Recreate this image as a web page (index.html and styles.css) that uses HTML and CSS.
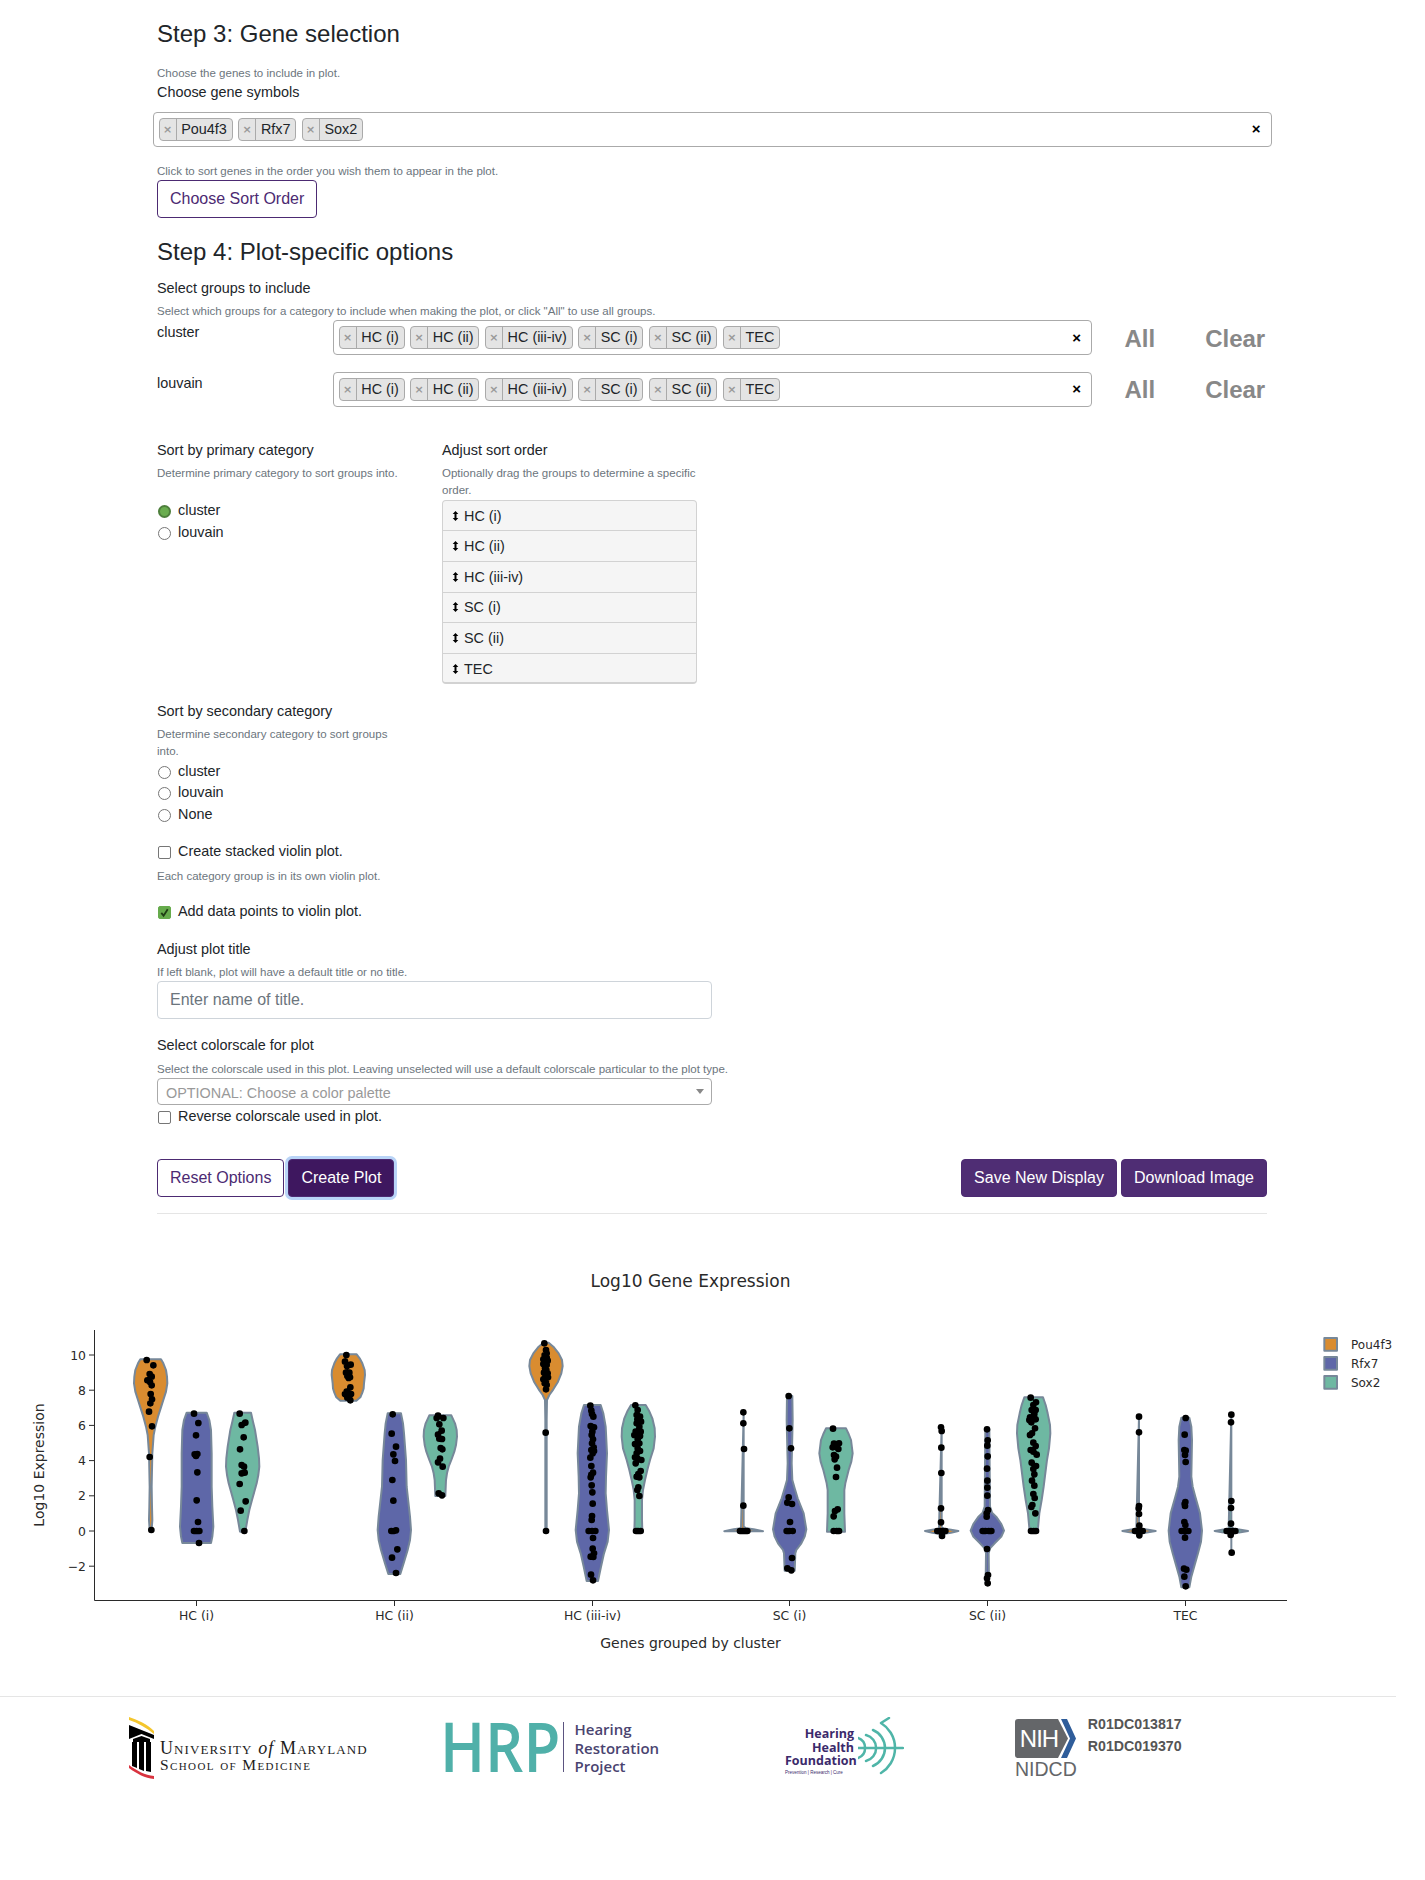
FILE: index.html
```html
<!DOCTYPE html>
<html>
  <head>
    <meta charset="utf-8">
    <title>Plot options</title>
    <link rel="stylesheet" href="styles.css">
  </head>
  <body>
    <svg class="defs" width="0" height="0">
      <symbol id="updown" viewBox="0 0 8 12">
        <path d="M4 0 7.4 3.6H5.2V8.4H7.4L4 12 .6 8.4H2.8V3.6H.6Z"/>
      </symbol>
    </svg>

    <div class="main">
      <h4 class="step">Step 3: Gene selection</h4>
      <div class="hint hint-first">Choose the genes to include in plot.</div>
      <div class="lbl">Choose gene symbols</div>
      <div class="tagbox tagbox-wide">
        <span class="chip"><i>×</i><b>Pou4f3</b></span>
        <span class="chip"><i>×</i><b>Rfx7</b></span>
        <span class="chip"><i>×</i><b>Sox2</b></span>
        <span class="clear-x">×</span>
      </div>
      <div class="hint hint-sort">Click to sort genes in the order you wish them to appear in the plot.</div>
      <button class="btn btn-line">Choose Sort Order</button>

      <h4 class="step step-four">Step 4: Plot-specific options</h4>
      <div class="lbl lbl-groups">Select groups to include</div>
      <div class="hint">Select which groups for a category to include when making the plot, or click "All" to use all groups.</div>

      <div class="group-row">
        <div class="lbl">cluster</div>
        <div class="tagbox">
          <span class="chip"><i>×</i><b>HC (i)</b></span>
          <span class="chip"><i>×</i><b>HC (ii)</b></span>
          <span class="chip"><i>×</i><b>HC (iii-iv)</b></span>
          <span class="chip"><i>×</i><b>SC (i)</b></span>
          <span class="chip"><i>×</i><b>SC (ii)</b></span>
          <span class="chip"><i>×</i><b>TEC</b></span>
          <span class="clear-x">×</span>
        </div>
        <div class="all-clear"><span>All</span><span>Clear</span></div>
      </div>
      <div class="group-row group-row-two">
        <div class="lbl">louvain</div>
        <div class="tagbox">
          <span class="chip"><i>×</i><b>HC (i)</b></span>
          <span class="chip"><i>×</i><b>HC (ii)</b></span>
          <span class="chip"><i>×</i><b>HC (iii-iv)</b></span>
          <span class="chip"><i>×</i><b>SC (i)</b></span>
          <span class="chip"><i>×</i><b>SC (ii)</b></span>
          <span class="chip"><i>×</i><b>TEC</b></span>
          <span class="clear-x">×</span>
        </div>
        <div class="all-clear"><span>All</span><span>Clear</span></div>
      </div>

      <div class="sort-cols">
        <div>
          <div class="lbl">Sort by primary category</div>
          <div class="hint">Determine primary category to sort groups into.</div>
          <div class="choices choices-primary">
            <div class="choice"><span class="radio on"></span>cluster</div>
            <div class="choice"><span class="radio"></span>louvain</div>
          </div>
        </div>
        <div>
          <div class="lbl">Adjust sort order</div>
          <div class="hint">Optionally drag the groups to determine a specific order.</div>
          <ul class="sortlist">
            <li><svg><use href="#updown"/></svg>HC (i)</li>
            <li><svg><use href="#updown"/></svg>HC (ii)</li>
            <li><svg><use href="#updown"/></svg>HC (iii-iv)</li>
            <li><svg><use href="#updown"/></svg>SC (i)</li>
            <li><svg><use href="#updown"/></svg>SC (ii)</li>
            <li><svg><use href="#updown"/></svg>TEC</li>
          </ul>
        </div>
      </div>

      <div class="narrow">
        <div class="lbl lbl-secondary">Sort by secondary category</div>
        <div class="hint">Determine secondary category to sort groups into.</div>
        <div class="choices">
          <div class="choice"><span class="radio"></span>cluster</div>
          <div class="choice"><span class="radio"></span>louvain</div>
          <div class="choice"><span class="radio"></span>None</div>
        </div>
      </div>

      <div class="choice choice-stacked"><span class="box"></span>Create stacked violin plot.</div>
      <div class="hint hint-stacked">Each category group is in its own violin plot.</div>
      <div class="choice choice-points">
        <span class="box on"><svg viewBox="0 0 12 12"><path d="M2.5 6.500 5 9.500 9.500 2.500"/></svg></span>Add data points to violin plot.
      </div>

      <div class="lbl lbl-title">Adjust plot title</div>
      <div class="hint hint-title">If left blank, plot will have a default title or no title.</div>
      <div class="text-input">Enter name of title.</div>

      <div class="lbl lbl-scale">Select colorscale for plot</div>
      <div class="hint">Select the colorscale used in this plot. Leaving unselected will use a default colorscale particular to the plot type.</div>
      <div class="select-box"><span class="select-text">OPTIONAL: Choose a color palette</span><span class="caret"></span></div>
      <div class="choice choice-reverse"><span class="box"></span>Reverse colorscale used in plot.</div>

      <div class="btn-row">
        <div class="btn-group">
          <button class="btn btn-line">Reset Options</button>
          <button class="btn btn-focus">Create Plot</button>
        </div>
        <div class="btn-group">
          <button class="btn btn-fill">Save New Display</button>
          <button class="btn btn-fill">Download Image</button>
        </div>
      </div>
      <div class="rule"></div>
    </div>

    <svg class="plot" viewBox="0 1214 1425 482" width="1425" height="482">
      <text class="plot-title" x="690.5" y="1287">Log10 Gene Expression</text>
      <text class="axis-title" x="690.5" y="1648">Genes grouped by cluster</text>
      <text class="axis-title" transform="translate(44 1465) rotate(-90)">Log10 Expression</text>

      <path class="axis" d="M94.5 1330V1600.5H1287M89 1355H94M89 1390.2H94M89 1425.4H94M89 1460.6H94M89 1495.8H94M89 1531H94M89 1566.2H94M196.5 1600V1606M394.5 1600V1606M592.5 1600V1606M789.5 1600V1606M987.5 1600V1606M1185.5 1600V1606"/>
      <text class="tick tick-y" x="86" y="1359.5">10</text>
      <text class="tick tick-y" x="86" y="1394.5">8</text>
      <text class="tick tick-y" x="86" y="1430">6</text>
      <text class="tick tick-y" x="86" y="1465">4</text>
      <text class="tick tick-y" x="86" y="1500">2</text>
      <text class="tick tick-y" x="86" y="1535.5">0</text>
      <text class="tick tick-y" x="86" y="1570.5">−2</text>
      <text class="tick" x="196.5" y="1620">HC (i)</text>
      <text class="tick" x="394.5" y="1620">HC (ii)</text>
      <text class="tick" x="592.5" y="1620">HC (iii-iv)</text>
      <text class="tick" x="789.5" y="1620">SC (i)</text>
      <text class="tick" x="987.5" y="1620">SC (ii)</text>
      <text class="tick" x="1185.5" y="1620">TEC</text>

      <g transform="translate(20 1320) scale(.33333)">
        <polygon class="orange" transform="translate(392 0)" points="-31,118 31,118 38,130 46,150 49,170 50,190 46,215 38,240 30,265 22,290 14,320 9,345 5,400 3,500 4,560 5,600 3,630 -3,630 -5,600 -4,560 -3,500 -5,400 -9,345 -14,320 -22,290 -30,265 -38,240 -46,215 -50,190 -49,170 -46,150 -38,130"/>
        <polygon class="blue" transform="translate(530 0)" points="-30,278 30,278 38,300 43,330 45,400 45,500 47,560 50,620 47,650 43,669 -43,669 -47,650 -50,620 -47,560 -45,500 -45,400 -43,330 -38,300"/>
        <polygon class="green" transform="translate(668 0)" points="-25,278 25,278 31,305 37,330 45,380 49,415 50,440 47,465 42,490 28,540 20,570 14,600 8,635 -8,635 -14,600 -20,570 -28,540 -42,490 -47,465 -50,440 -49,415 -45,380 -37,330 -31,305"/>
        <polygon class="orange" transform="translate(985 0)" points="-25,103 25,103 34,115 42,130 49,150 50,165 47,190 46,205 42,218 36,232 24,242 -24,242 -36,232 -42,218 -46,205 -47,190 -50,165 -49,150 -42,130 -34,115"/>
        <polygon class="blue" transform="translate(1123 0)" points="-20,280 20,280 26,310 29,340 35,420 37,500 42,545 47,590 50,630 47,660 40,690 28,730 18,762 -18,762 -28,730 -40,690 -47,660 -50,630 -47,590 -42,545 -37,500 -35,420 -29,340 -26,310"/>
        <polygon class="green" transform="translate(1261 0)" points="-33,286 33,286 44,310 49,330 50,350 47,375 42,395 33,420 25,440 20,460 17,480 15,528 -15,528 -17,480 -20,460 -25,440 -33,420 -42,395 -47,375 -50,350 -49,330 -44,310"/>
        <path class="dots" d="M380 120h.1M400 136h.1M389 162h.1M395 170h.1M382 181h.1M390 186h.1M395 196h.1M392 222h.1M396 238h.1M391 250h.1M387 275h.1M396 319h.1M389 411h.1M394 630h.1
          M522 281h.1M535 309h.1M528 346h.1M524 403h.1M532 402h.1M528 408h.1M532 457h.1M530 541h.1M534 606h.1M522 633h.1M530 633h.1M538 633h.1M537 669h.1
          M659 281h.1M676 308h.1M665 315h.1M671 352h.1M660 388h.1M665 435h.1M672 440h.1M665 460h.1M674 458h.1M659 492h.1M677 544h.1M662 572h.1M673 633h.1
          M979 105h.1M975 125h.1M992 134h.1M981 138h.1M978 158h.1M988 158h.1M982 168h.1M990 172h.1M986 174h.1M991 202h.1M980 215h.1M993 222h.1M975 222h.1M982 233h.1M991 241h.1
          M1118 283h.1M1115 341h.1M1128 380h.1M1120 403h.1M1125 423h.1M1117 480h.1M1120 542h.1M1114 633h.1M1122 633h.1M1128 631h.1M1132 688h.1M1116 713h.1M1128 759h.1
          M1254 287h.1M1250 294h.1M1270 294h.1M1258 313h.1M1265 332h.1M1254 344h.1M1258 356h.1M1266 357h.1M1262 384h.1M1267 388h.1M1260 416h.1M1254 427h.1M1268 440h.1M1256 520h.1M1266 526h.1"/>
      </g>

      <g transform="translate(480 1320) scale(.33333)">
        <polygon class="orange" transform="translate(198 0)" points="-8,68 8,68 22,80 38,100 48,120 50,138 46,160 36,185 22,208 10,225 3,240 2,300 2,630 -2,630 -2,300 -3,240 -10,225 -22,208 -36,185 -46,160 -50,138 -48,120 -38,100 -22,80"/>
        <polygon class="blue" transform="translate(337 0)" points="-25,255 25,255 33,280 40,320 44,400 41,470 40,520 44,570 50,630 46,665 35,700 26,740 17,783 -17,783 -26,740 -35,700 -46,665 -50,630 -44,570 -40,520 -41,470 -44,400 -40,320 -33,280"/>
        <polygon class="green" transform="translate(475 0)" points="-22,255 22,255 32,272 42,295 49,325 50,350 46,385 35,420 27,450 20,480 14,510 11,540 11,600 12,635 -12,635 -11,600 -11,540 -14,510 -20,480 -27,450 -35,420 -46,385 -50,350 -49,325 -42,295 -32,272"/>
        <polygon class="orange" transform="translate(791 0)" points="0,277 0,620 8,625 30,628 58,634 -58,634 -30,628 -8,625"/>
        <polygon class="blue" transform="translate(929 0)" points="-8,228 8,228 9,300 6,430 8,480 15,505 24,535 42,580 50,628 45,650 35,670 20,690 17,700 15,752 -15,752 -17,700 -20,690 -35,670 -45,650 -50,628 -42,580 -24,535 -15,505 -8,480 -6,430 -9,300"/>
        <polygon class="green" transform="translate(1068 0)" points="-30,325 30,325 38,342 45,360 50,400 46,425 38,450 28,490 25,510 25,580 27,635 -27,635 -25,580 -25,510 -28,490 -38,450 -46,425 -50,400 -45,360 -38,342"/>
        <polygon class="orange" transform="translate(1385 0)" points="0,318 0,622 8,626 28,629 50,633 28,638 8,641 -8,641 -28,638 -50,633 -28,629 -8,626"/>
        <path class="dots" d="M193 70h.1M198 90h.1M200 100h.1M194 105h.1M200 112h.1M190 118h.1M203 122h.1M195 125h.1M190 132h.1M200 135h.1M195 145h.1M199 150h.1M192 158h.1M203 160h.1M196 170h.1M190 178h.1M204 172h.1M198 182h.1M194 190h.1M200 195h.1M198 208h.1M197 338h.1M198 633h.1
          M331 257h.1M334 272h.1M336 282h.1M340 290h.1M332 318h.1M342 322h.1M337 335h.1M335 345h.1M339 358h.1M336 370h.1M341 382h.1M334 390h.1M342 393h.1M338 400h.1M331 413h.1M334 438h.1M339 458h.1M334 464h.1M332 472h.1M335 496h.1M337 517h.1M338 551h.1M336 588h.1M335 600h.1M326 633h.1M336 633h.1M346 633h.1M339 654h.1M338 686h.1M342 700h.1M332 710h.1M340 711h.1M333 764h.1M339 781h.1
          M466 256h.1M473 270h.1M470 285h.1M480 290h.1M472 298h.1M483 305h.1M470 310h.1M478 320h.1M467 335h.1M482 335h.1M472 342h.1M463 345h.1M480 348h.1M473 358h.1M478 370h.1M465 372h.1M473 385h.1M480 393h.1M470 400h.1M465 412h.1M484 420h.1M472 415h.1M467 430h.1M482 453h.1M475 462h.1M470 470h.1M478 472h.1M475 502h.1M472 510h.1M478 528h.1M468 633h.1M474 633h.1M482 633h.1
          M790 277h.1M790 310h.1M792 387h.1M790 557h.1M780 633h.1M788 633h.1M796 633h.1M802 633h.1
          M926 228h.1M928 325h.1M933 385h.1M926 532h.1M922 548h.1M936 552h.1M930 606h.1M920 633h.1M928 633h.1M938 633h.1M936 714h.1M922 745h.1M934 751h.1
          M1059 326h.1M1062 371h.1M1077 370h.1M1058 382h.1M1075 387h.1M1062 405h.1M1068 410h.1M1064 418h.1M1071 443h.1M1068 471h.1M1073 568h.1M1065 573h.1M1061 589h.1M1061 633h.1M1070 633h.1M1077 633h.1
          M1383 322h.1M1385 333h.1M1384 383h.1M1384 459h.1M1383 565h.1M1383 607h.1M1372 633h.1M1380 633h.1M1388 633h.1M1396 633h.1M1386 648h.1"/>
      </g>

      <g transform="translate(940 1320) scale(.33333)">
        <polygon class="blue" transform="translate(142 0)" points="-6,328 6,328 8,560 14,578 28,592 42,612 50,632 42,650 22,670 8,685 4,700 5,790 -5,790 -4,700 -8,685 -22,670 -42,650 -50,632 -42,612 -28,592 -14,578 -8,560"/>
        <polygon class="green" transform="translate(281 0)" points="-28,232 28,232 36,255 42,280 49,315 50,340 46,385 40,420 30,500 24,540 17,580 12,635 -12,635 -17,580 -24,540 -30,500 -40,420 -46,385 -50,340 -49,315 -42,280 -36,255"/>
        <polygon class="orange" transform="translate(597 0)" points="0,290 0,622 8,626 28,629 50,633 28,637 8,640 -8,640 -28,637 -50,633 -28,629 -8,626"/>
        <polygon class="blue" transform="translate(736 0)" points="-12,293 12,293 18,320 20,360 18,470 22,500 30,530 44,580 50,632 47,665 38,700 28,735 18,770 12,802 -12,802 -18,770 -28,735 -38,700 -47,665 -50,632 -44,580 -30,530 -22,500 -18,470 -20,360 -18,320"/>
        <polygon class="green" transform="translate(874 0)" points="0,283 0,622 8,626 28,629 50,633 28,637 8,640 0,645 0,698 0,645 -8,640 -28,637 -50,633 -28,629 -8,626"/>
        <path class="dots" d="M141 328h.1M143 361h.1M142 377h.1M143 409h.1M141 446h.1M142 482h.1M142 503h.1M142 527h.1M144 570h.1M140 580h.1M140 590h.1M128 633h.1M136 633h.1M146 633h.1M154 633h.1M141 687h.1M144 765h.1M141 775h.1M143 790h.1
          M272 233h.1M288 247h.1M280 255h.1M275 270h.1M287 270h.1M283 282h.1M270 292h.1M287 298h.1M268 300h.1M274 307h.1M285 325h.1M276 340h.1M270 345h.1M280 368h.1M287 378h.1M272 390h.1M280 395h.1M290 404h.1M275 428h.1M288 438h.1M280 447h.1M283 463h.1M276 482h.1M283 497h.1M280 522h.1M284 534h.1M277 555h.1M274 561h.1M286 580h.1M273 633h.1M281 633h.1M288 633h.1
          M597 290h.1M597 337h.1M597 558h.1M596 565h.1M597 582h.1M598 617h.1M585 633h.1M592 633h.1M600 633h.1M608 633h.1M598 646h.1
          M737 294h.1M734 344h.1M733 390h.1M737 392h.1M735 405h.1M737 426h.1M736 546h.1M734 552h.1M735 558h.1M733 606h.1M736 615h.1M725 633h.1M735 633h.1M745 633h.1M735 653h.1M732 746h.1M739 749h.1M733 770h.1M737 799h.1
          M874 284h.1M873 307h.1M874 543h.1M873 564h.1M873 611h.1M860 633h.1M870 633h.1M878 633h.1M886 633h.1M872 645h.1M875 698h.1"/>
        <rect class="orange" x="1153" y="54" width="38" height="38"/>
        <rect class="blue" x="1153" y="111" width="38" height="38"/>
        <rect class="green" x="1153" y="168" width="38" height="38"/>
      </g>
      <text class="legend" x="1351" y="1349">Pou4f3</text>
      <text class="legend" x="1351" y="1368">Rfx7</text>
      <text class="legend" x="1351" y="1387">Sox2</text>
    </svg>

    <div class="footer">
      <div class="logo logo-umd">
        <svg class="umd-mark" viewBox="0 0 25 62" width="25" height="62">
          <path fill="#f4c62d" d="M0 0C9 3 18 7 25 14V17C18 11 9 6 0 3Z"/>
          <path d="M0 8 25 18V22L12.500 17 0 22Z"/>
          <path d="M4 22 12.500 19 21 22V25H4Z"/>
          <path d="M3 25H8V51L3 49ZM10 25H15V54L10 52ZM17 25H22V55L17 54Z"/>
          <path fill="#d9333f" d="M0 48C8 54 16 58 25 59V62C16 61 8 57 0 51Z"/>
        </svg>
        <div class="umd-text">
          <div class="umd-top">University <em>of</em> Maryland</div>
          <div class="umd-bottom">School of Medicine</div>
        </div>
      </div>

      <div class="logo logo-hrp">
        <span class="hrp-big">HRP</span>
        <span class="hrp-bar"></span>
        <span class="hrp-small">Hearing<br>Restoration<br>Project</span>
      </div>

      <div class="logo logo-hhf">
        <div class="hhf-text">
          <div class="hhf-name">Hearing<br>Health<br>Foundation</div>
          <div class="hhf-tag">Prevention | Research | Cure</div>
        </div>
        <svg class="hhf-mark" viewBox="0 0 46 58" width="46" height="58">
          <path d="M0 31H45M0 21A10.600 10.600 0 0 1 0 41M8 18A13.400 13.400 0 0 1 8 44M15 13A19.500 19.500 0 0 1 15 49M23 6A29.300 29.300 0 0 1 23 56M23 6 31 1"/>
        </svg>
      </div>

      <div class="logo logo-nih">
        <div>
          <svg class="nih-mark" viewBox="0 0 61 39" width="61" height="39">
            <path fill="#646669" d="M3 0H43L53 19.500 43 39H3Q0 39 0 36V3Q0 0 3 0Z"/>
            <path fill="#2f5d9a" d="M46 0H52L61 19.500 52 39H46L55 19.500Z"/>
            <text class="nih-word" x="24" y="28">NIH</text>
          </svg>
          <div class="nidcd">NIDCD</div>
        </div>
        <div class="grants">R01DC013817<br>R01DC019370</div>
      </div>
    </div>
  </body>
</html>
```

FILE: styles.css
```css
html {
  background-color: white;
}

body {
  margin: 0;
  width: 1425px;
  font-family: "Liberation Sans", Arial, sans-serif;
  font-size: 16px;
  line-height: 24px;
  color: #212529;
}

.defs {
  display: block;
}

.main {
  margin-left: 157px;
  width: 1110px;
  padding-top: 19px;
}

.step {
  margin: 0;
  font-size: 24px;
  font-weight: 400;
  line-height: 29px;
}

.step-four {
  margin-top: 19px;
}

.lbl {
  font-size: 14.400px;
  line-height: 20px;
}

.lbl-groups {
  margin-top: 12px;
}

.lbl-secondary {
  margin-top: 17px;
}

.lbl-title {
  margin-top: 16.300px;
}

.lbl-scale {
  margin-top: 16.300px;
}

.hint {
  margin-top: 5.500px;
  font-size: 11.520px;
  line-height: 17px;
  color: #6c757d;
}

.hint-first {
  margin-top: 16.700px;
}

.hint-sort {
  margin-top: 16px;
}

.hint-stacked {
  margin-top: 5px;
}

.hint-title {
  margin-top: 4.500px;
}

.tagbox {
  box-sizing: border-box;
  display: flex;
  align-items: center;
  gap: 5.500px;
  height: 35px;
  padding: 0 10px 0 5px;
  border: 1px solid #aaa;
  border-radius: 4px;
}

.tagbox-wide {
  width: 1119px;
  margin: 10px 0 0 -4.500px;
}

.chip {
  box-sizing: border-box;
  display: flex;
  height: 23px;
  line-height: 21px;
  font-size: 14.400px;
  background-color: #e4e4e4;
  border: 1px solid #aaa;
  border-radius: 4px;
}

.chip i {
  width: 16px;
  border-right: 1px solid #aaa;
  text-align: center;
  font-family: "DejaVu Sans", sans-serif;
  font-style: normal;
  font-weight: bold;
  font-size: 11px;
  color: #999;
}

.chip b {
  padding: 0 4.750px;
  font-weight: 400;
}

.clear-x {
  margin-left: auto;
  margin-right: 0;
  font-weight: bold;
  font-size: 15px;
  color: black;
}

.btn {
  box-sizing: border-box;
  height: 38px;
  padding: 0 12px;
  border: 1px solid #4c2a72;
  border-radius: 4px;
  font-family: inherit;
  font-size: 16px;
  line-height: 24px;
}

.btn-line {
  background-color: white;
  color: #4c2a72;
}

.btn-fill {
  background-color: #4f2d74;
  color: white;
}

.btn-focus {
  background-color: #3e175f;
  color: white;
  box-shadow: 0 0 0 3px #b9d4f7;
}

.group-row {
  display: grid;
  grid-template-columns: 175.500px 759.500px 1fr;
}

.group-row > .lbl {
  padding-top: 1.500px;
}

.group-row-two {
  margin-top: 16.600px;
}

.all-clear {
  display: flex;
  align-items: center;
  gap: 50px;
  height: 35px;
  padding: 2px 0 0 32.500px;
  box-sizing: border-box;
  font-size: 24px;
  font-weight: bold;
  color: #888;
}

.sort-cols {
  display: grid;
  grid-template-columns: 255px 255px;
  column-gap: 30px;
  margin-top: 33.100px;
}

.narrow {
  width: 255px;
}

.choices {
  margin-top: .400px;
}

.choices-primary {
  margin-top: 17.800px;
}

.choice {
  display: flex;
  align-items: center;
  height: 21.700px;
  line-height: 21.700px;
  font-size: 14.400px;
}

.choice-stacked {
  margin-top: 15px;
}

.choice-points {
  margin-top: 16.900px;
}

.choice-reverse {
  margin-top: .900px;
}

.radio,
.box {
  box-sizing: border-box;
  flex: none;
  width: 13px;
  height: 13px;
  margin: 1px 7px 0 1px;
  border: 1px solid #767676;
  background-color: white;
}

.radio {
  border-radius: 50%;
}

.radio.on {
  background-color: #6aad4f;
  border: 2px solid #4e7f3c;
}

.box {
  border-radius: 2px;
}

.box.on {
  background-color: #66ab4c;
  border-color: #66ab4c;
}

.box svg {
  display: block;
  width: 11px;
  height: 11px;
  fill: none;
  stroke: #1f3d14;
  stroke-width: 2;
}

.sortlist {
  margin: .500px 0 0;
  padding: 0;
  list-style: none;
  border: 1px solid #d2d2d2;
  border-bottom-width: 2px;
  border-radius: 4px;
  background-color: #f5f5f5;
  height: 184px;
  box-sizing: border-box;
}

.sortlist li {
  box-sizing: border-box;
  display: flex;
  align-items: center;
  height: 30.600px;
  padding-left: 9px;
  border-bottom: 1px solid #d2d2d2;
  font-size: 14.400px;
}

.sortlist li:last-child {
  border-bottom: 0;
}

.sortlist svg {
  width: 7px;
  height: 10px;
  margin-right: 5px;
}

.text-input {
  box-sizing: border-box;
  width: 554.500px;
  height: 38px;
  padding: 0 12px;
  border: 1px solid #ced4da;
  border-radius: 4px;
  line-height: 36px;
  color: #6c757d;
}

.select-box {
  box-sizing: border-box;
  display: flex;
  align-items: center;
  justify-content: space-between;
  width: 554.500px;
  height: 27.500px;
  padding: 0 7px 0 8px;
  border: 1px solid #aaa;
  border-radius: 4px;
  font-size: 14.400px;
  color: #999;
}

.select-text {
  padding-top: 3px;
}

.caret {
  width: 0;
  height: 0;
  border-top: 5px solid #888;
  border-left: 4px solid transparent;
  border-right: 4px solid transparent;
}

.btn-row {
  display: flex;
  justify-content: space-between;
  margin-top: 31.700px;
}

.btn-group {
  display: flex;
  gap: 4px;
}

.rule {
  margin-top: 15.700px;
  border-top: 1px solid #e5e5e5;
}

/* plot */
.plot {
  display: block;
  font-family: "DejaVu Sans", sans-serif;
}

.plot text {
  fill: #2a2a2a;
}

.plot-title {
  font-size: 17px;
  text-anchor: middle;
}

.axis-title {
  font-size: 14px;
  text-anchor: middle;
}

.tick {
  font-size: 12.400px;
  text-anchor: middle;
}

.tick-y {
  text-anchor: end;
}

.legend {
  font-size: 12px;
}

.axis {
  fill: none;
  stroke: #2a2a2a;
  stroke-width: 1;
}

.orange,
.blue,
.green {
  stroke: #778899;
  stroke-width: 6;
  stroke-linejoin: round;
}

.orange {
  fill: #d98c30;
}

.blue {
  fill: #5e67a8;
}

.green {
  fill: #6eb8a2;
}

.dots {
  fill: none;
  stroke: black;
  stroke-width: 20;
  stroke-linecap: round;
}

/* footer */
.footer {
  display: flex;
  box-sizing: border-box;
  width: 1396px;
  height: 183px;
  border-top: 1px solid #e5e5e5;
}

.logo {
  display: flex;
  flex: none;
}

.logo-umd {
  margin: 20px 0 0 129px;
  gap: 6px;
  width: 237px;
}

.umd-mark {
  flex: none;
}

.umd-text {
  margin-top: 22px;
  font-family: "Liberation Serif", serif;
  font-variant: small-caps;
  color: #1c1c1c;
}

.umd-text em {
  font-variant: normal;
}

.umd-top {
  font-size: 18px;
  line-height: 18px;
  letter-spacing: 1.100px;
  white-space: nowrap;
}

.umd-bottom {
  font-size: 15.500px;
  line-height: 16px;
  letter-spacing: 1.400px;
  white-space: nowrap;
}

.logo-hrp {
  margin: 21px 0 0 73.500px;
  align-items: flex-start;
  width: 220.500px;
}

.hrp-big {
  flex: none;
  width: 115px;
  font-family: "Open Sans", sans-serif;
  font-weight: 600;
  font-size: 69px;
  line-height: 54px;
  color: #50b0a9;
  transform: scaleX(.87);
  transform-origin: left top;
}

.hrp-bar {
  flex: none;
  width: 1px;
  height: 50px;
  margin: 4px 11px 0 8px;
  background-color: #5b5480;
}

.hrp-small {
  flex: none;
  margin-top: 2px;
  font-family: "Open Sans", sans-serif;
  font-weight: 600;
  font-size: 15px;
  line-height: 18.500px;
  color: #4a4470;
  white-space: nowrap;
}

.logo-hhf {
  margin: 20px 0 0 125px;
  width: 230px;
}

.hhf-text {
  width: 69px;
  margin-top: 10px;
  color: #3b2a6b;
}

.hhf-name {
  font-family: "Open Sans", sans-serif;
  font-weight: 700;
  font-size: 12.500px;
  line-height: 13.500px;
  text-align: right;
}

.hhf-tag {
  margin-top: 2px;
  font-size: 4.500px;
  line-height: 6px;
  white-space: nowrap;
}

.hhf-mark {
  margin-left: 4px;
  fill: none;
  stroke: #4fb5a8;
  stroke-width: 2.500;
  stroke-linecap: round;
}

.logo-nih {
  margin: 22px 0 0 0;
  gap: 11px;
}

.nih-mark {
  display: block;
}

.nih-word {
  font-size: 24px;
  fill: white;
  text-anchor: middle;
  letter-spacing: -1px;
}

.nidcd {
  font-size: 19.500px;
  line-height: 22px;
  color: #646669;
}

.grants {
  margin-top: -6px;
  font-size: 14.200px;
  font-weight: bold;
  line-height: 22px;
  color: #555;
}
```
